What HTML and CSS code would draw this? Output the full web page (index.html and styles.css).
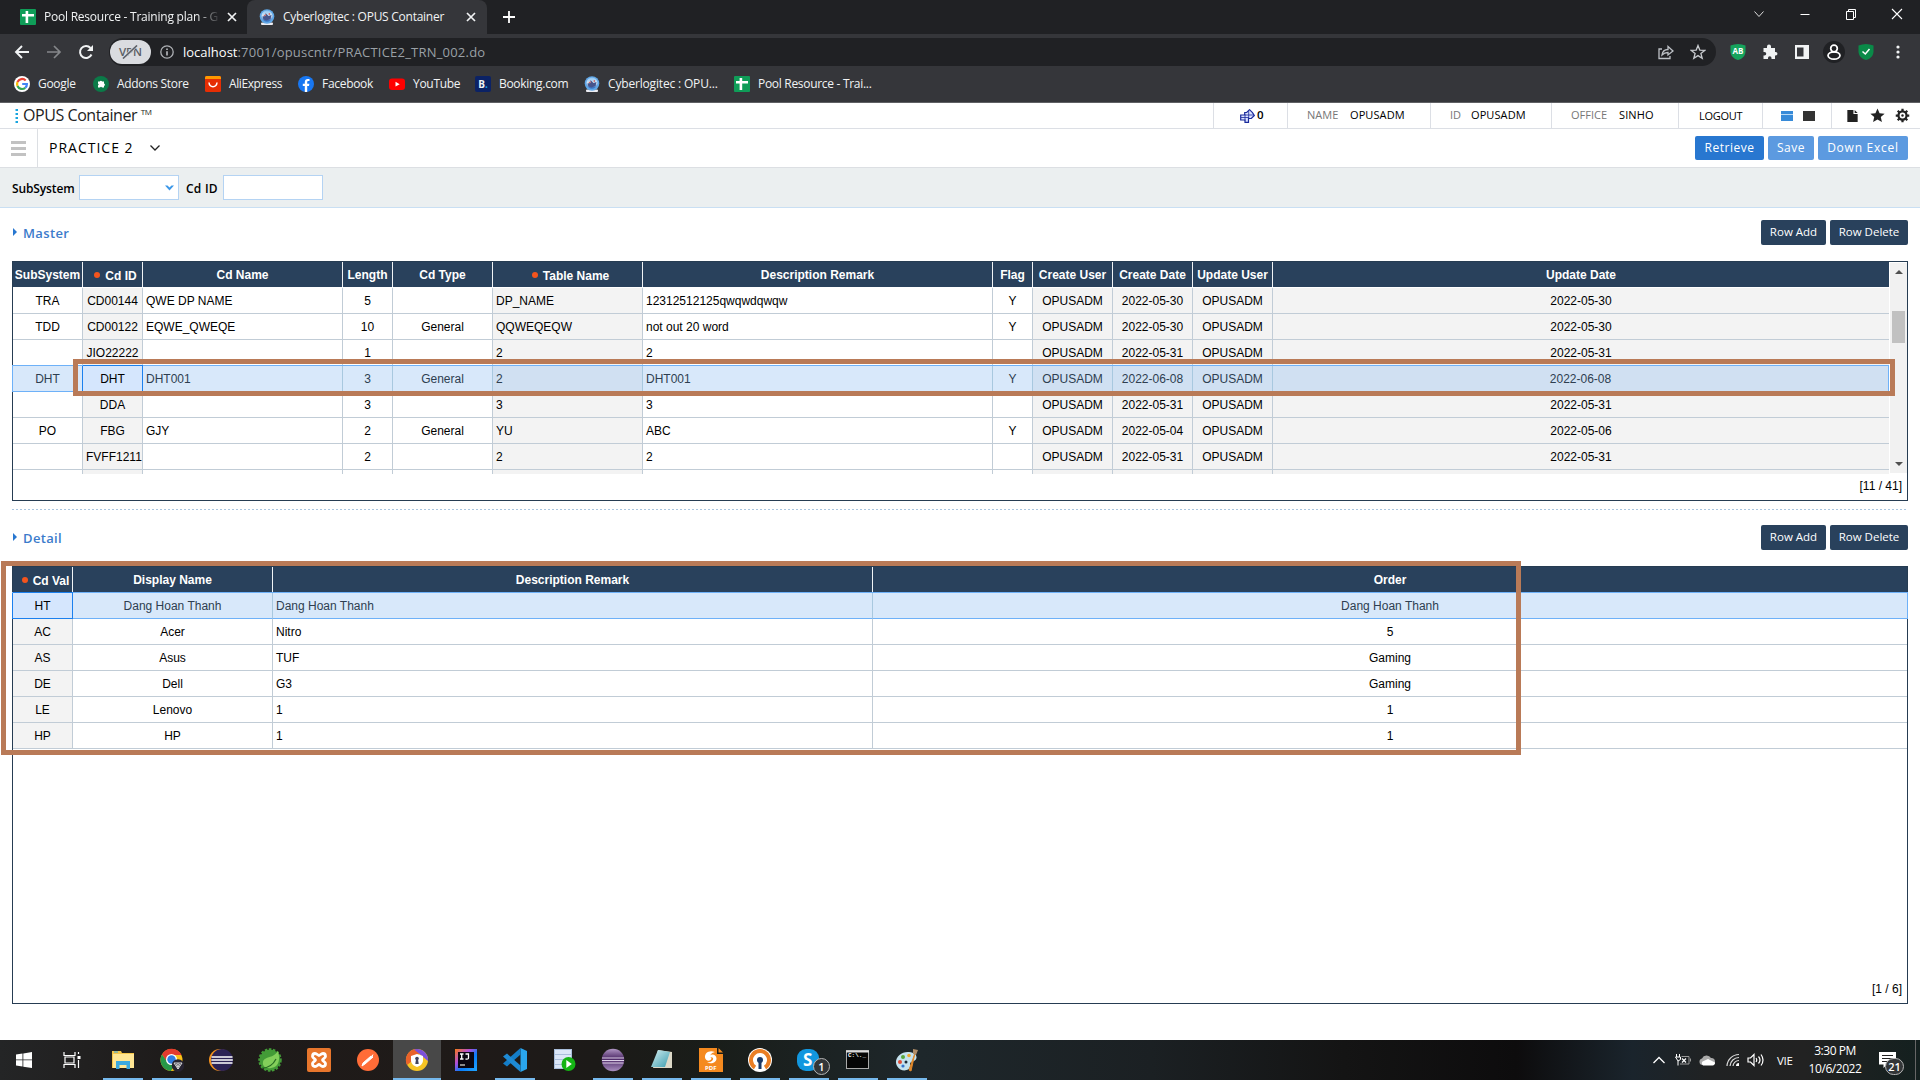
FILE: index.html
```html
<!DOCTYPE html>
<html lang="en">
<head>
<meta charset="utf-8">
<title>Cyberlogitec : OPUS Container</title>
<link rel="stylesheet" href="styles.css">
</head>
<body>
<svg class="defs" width="0" height="0">
  <defs>
    <linearGradient id="globe" x1="0" y1="0" x2="0" y2="1"><stop offset="0" stop-color="#8cc4f2"/><stop offset=".5" stop-color="#d6e6f4"/><stop offset="1" stop-color="#1d5bb5"/></linearGradient>
    <linearGradient id="ij" x1="0" y1="0" x2="1" y2="1"><stop offset="0" stop-color="#f97a12"/><stop offset=".35" stop-color="#b24dd8"/><stop offset=".6" stop-color="#087cfa"/><stop offset="1" stop-color="#21a6ff"/></linearGradient>
    <linearGradient id="purple" x1="0" y1="0" x2="0" y2="1"><stop offset="0" stop-color="#b096c4"/><stop offset=".45" stop-color="#4b2765"/><stop offset="1" stop-color="#a98fc0"/></linearGradient>
    <linearGradient id="glass" x1="0" y1="0" x2="1" y2="1"><stop offset="0" stop-color="#d5f0f2"/><stop offset="1" stop-color="#3b9cae"/></linearGradient>
    <symbol id="sheet" viewBox="0 0 16 16"><rect width="16" height="16" rx="1" fill="#0f9d58"/><path d="M2 5h12v2.4H8.2V14H5.6V7.4H2zM5.6 2h2.6v4H5.6z" fill="#fff"/></symbol>
    <symbol id="opus" viewBox="0 0 16 16"><rect x="2" y="13.500" width="12" height="2.500" rx="1" fill="#ececf2"/><circle cx="8" cy="7.500" r="7.300" fill="#5fa6e6"/><circle cx="8" cy="7" r="5.500" fill="url(#globe)"/><path d="M3.500 7.500l3-.5V4l3 3 3-1-1 4-4 1.500-3-1z" fill="#47558c"/><path d="M4.500 7l2-2v2zM9 5l2-1v2z" fill="#d9544d"/></symbol>
    <symbol id="x" viewBox="0 0 10 10"><path d="M1 1l8 8M9 1L1 9" stroke="#f1f3f4" stroke-width="1.7"/></symbol>
  </defs>
</svg>

<header class="browser">
  <div class="tabs">
    <div class="tab">
      <svg class="fav"><use href="#sheet"/></svg><span class="tab-title fade">Pool Resource - Training plan - G</span><svg class="close"><use href="#x"/></svg>
    </div>
    <div class="tab active">
      <svg class="fav"><use href="#opus"/></svg><span class="tab-title">Cyberlogitec : OPUS Container</span><svg class="close"><use href="#x"/></svg>
    </div>
    <svg class="plus" viewBox="0 0 12 12"><path d="M6 0v12M0 6h12" stroke="#fff" stroke-width="1.8"/></svg>
    <div class="window-buttons">
      <svg viewBox="0 0 12 12"><path d="M1.500 3.500L6 8.500l4.500-5" fill="none" stroke="#ddd"/></svg>
      <svg viewBox="0 0 12 12"><path d="M1.500 6.500h9" stroke="#fff"/></svg>
      <svg viewBox="0 0 12 12"><path d="M1.500 3.500h7v8h-7zM3.500 3.500v-2h7v8h-2" fill="none" stroke="#fff"/></svg>
      <svg viewBox="0 0 12 12"><path d="M1 1l10 10M11 1L1 11" stroke="#fff" stroke-width="1.100"/></svg>
    </div>
  </div>
  <div class="toolbar">
    <svg class="nav" viewBox="0 0 16 16"><path d="M15 8H2M8 2L2 8l6 6" fill="none" stroke="#f1f3f4" stroke-width="1.900"/></svg>
    <svg class="nav" viewBox="0 0 16 16"><path d="M1 8h13M8 2l6 6-6 6" fill="none" stroke="#85878a" stroke-width="1.700"/></svg>
    <svg class="nav" viewBox="0 0 16 16"><path d="M13.500 10.500A6 6 0 1 1 12.500 4" fill="none" stroke="#f1f3f4" stroke-width="2"/><path d="M15 1v6H9z" fill="#f1f3f4"/></svg>
    <div class="address">
      <span class="vpn">VPN<svg viewBox="0 0 24 14"><path d="M6 13L19 0" stroke="#dadce0" stroke-width="3"/><path d="M5 13.500L19 .5" stroke="#5b5f66" stroke-width="1.600"/></svg></span>
      <svg class="info" viewBox="0 0 14 14"><circle cx="7" cy="7" r="6.200" fill="none" stroke="#aeb1b5" stroke-width="1.300"/><path d="M7 6.200v4.300M7 3.400v1.500" stroke="#c4c6ca" stroke-width="1.500"/></svg>
      <span class="url"><b>localhost</b>:7001/opuscntr/PRACTICE2_TRN_002.do</span>
      <svg class="share" viewBox="0 0 16 16"><path d="M4 5H1v9.500h11V12" fill="none" stroke="#bdc1c6" stroke-width="1.300"/><path d="M4 11c.5-4 3-5.500 6-5.500V2.500L15 7l-5 4V8.500c-3 0-4.500 1-6 2.500z" fill="none" stroke="#bdc1c6" stroke-width="1.300"/></svg>
      <svg class="star" viewBox="0 0 16 16"><path d="M8 1.500l1.800 4.600 4.900.3-3.800 3.100 1.300 4.800L8 11.600l-4.200 2.700 1.300-4.800L1.300 6.400l4.900-.3z" fill="none" stroke="#c7cace" stroke-width="1.300"/></svg>
    </div>
    <div class="extensions">
      <span class="shield"><svg viewBox="0 0 16 16"><path d="M8 0c2.500 0 5 .5 7.500 1.500v6C15.500 12 12 15 8 16 4 15 .5 12 .5 7.500v-6C3 .5 5.500 0 8 0z" fill="#16a35c"/></svg><i>AB</i></span>
      <svg viewBox="0 0 16 16"><path d="M5 2.500a2 2 0 0 1 4 0V4h4v4h.700a1.700 1.700 0 0 1 0 3.500H13V15H9.500v-1a1.700 1.700 0 0 0-3.500 0v1H1.500v-3.500h1a1.700 1.700 0 0 0 0-3.500h-1V4H5z" fill="#f1f3f4"/></svg>
      <svg viewBox="0 0 16 16"><path d="M1 1h14v14H1zM3 3.500v9h6.500v-9z" fill="#f1f3f4" fill-rule="evenodd"/></svg>
      <svg class="avatar" viewBox="0 0 22 22"><circle cx="11" cy="11" r="11" fill="#202124"/><circle cx="11" cy="7.500" r="3.300" fill="none" stroke="#fff" stroke-width="1.700"/><ellipse cx="11" cy="14.500" rx="6" ry="3.700" fill="none" stroke="#fff" stroke-width="1.700"/></svg>
      <svg viewBox="0 0 16 16"><path d="M8 0c2.500 0 5 .5 7.500 1.500v6C15.500 12 12 15 8 16 4 15 .5 12 .5 7.500v-6C3 .5 5.500 0 8 0z" fill="#0a8a48"/><path d="M4.500 7.500L7.300 10l4.200-5" fill="none" stroke="#fff" stroke-width="1.500"/></svg>
      <svg viewBox="0 0 16 16"><g fill="#f1f3f4"><circle cx="8" cy="3" r="1.600"/><circle cx="8" cy="8" r="1.600"/><circle cx="8" cy="13" r="1.600"/></g></svg>
    </div>
  </div>
  <nav class="bookmarks">
    <a><svg viewBox="0 0 16 16"><circle cx="8" cy="8" r="8" fill="#fff"/><g fill="none" stroke-width="2.200"><path d="M3.500 6A5 5 0 0 1 11.700 4.500" stroke="#ea4335"/><path d="M3.500 6a5 5 0 0 0 0 4" stroke="#fbbc05"/><path d="M3.500 10a5 5 0 0 0 7.800 1.800" stroke="#34a853"/><path d="M11.300 11.800A5 5 0 0 0 12.900 8H8.200" stroke="#4285f4"/></g></svg>Google</a>
    <a><svg viewBox="0 0 16 16"><circle cx="8" cy="8" r="8" fill="#0b7a48"/><path d="M5 5.500h1.700a1.300 1.300 0 0 1 2.400 0H11v2a1.300 1.300 0 0 1 0 2.500v1.500H9a1.200 1.200 0 0 0-2 0H5V9.500a1.200 1.200 0 0 0 0-2z" fill="#fff"/></svg>Addons Store</a>
    <a class="ali"><svg viewBox="0 0 16 16"><rect width="16" height="16" rx="1.500" fill="#e62e04"/><path d="M0 1.500Q0 0 1.500 0h13Q16 0 16 1.500V3H0z" fill="#ff9900"/><path d="M4 6.500c.5 5.500 7.500 5.500 8 0" fill="none" stroke="#fff" stroke-width="1.500"/></svg>AliExpress</a>
    <a><svg viewBox="0 0 16 16"><circle cx="8" cy="8" r="8" fill="#1877f2"/><path d="M6.800 16V10H4.800V7.700h2V6c0-2 1.200-3.100 3-3.100l1.700.1v2h-1c-1 0-1.300.6-1.300 1.200v1.500h2.200L11 10H9.200v6z" fill="#fff"/></svg>Facebook</a>
    <a><svg viewBox="0 0 16 16"><rect y="2.500" width="16" height="11.500" rx="3" fill="#f00"/><path d="M6.500 5.800v4.800l4.200-2.400z" fill="#fff"/></svg>YouTube</a>
    <a><span class="booking">B<em>.</em></span>Booking.com</a>
    <a class="wide"><svg><use href="#opus"/></svg>Cyberlogitec : OPU...</a>
    <a><svg><use href="#sheet"/></svg>Pool Resource - Trai...</a>
  </nav>
</header>

<main class="page">
  <div class="topbar">
    <svg class="dots" viewBox="0 0 4 16"><path d="M.500 1h2.500v2H.500zM.500 5h2.500v2H.500zM.500 9h2.500v2H.500zM.500 13h2.500v2H.500z" fill="#19a5e0"/></svg>
    <h1>OPUS Container <sup>TM</sup></h1>
    <div class="msg"><svg viewBox="0 0 15 14"><path d="M.7 6h4V3.500h2L9.500.7l3 3L14.300 6.500l-3 3H8.500v3.800H5V11H.7z" fill="#dbe2ff" stroke="#1a2a9c" stroke-width="1.200"/><path d="M5 5.500v6M1 8.500h8M8.700 2v8M5 6h9" stroke="#1a2a9c" stroke-width=".8"/></svg>0</div>
    <div class="who w-name"><span>NAME</span>OPUSADM</div>
    <div class="who w-id"><span>ID</span>OPUSADM</div>
    <div class="who w-office"><span>OFFICE</span>SINHO</div>
    <div class="logout">LOGOUT</div>
    <div class="views"><i class="split"></i><i class="solid"></i></div>
    <div class="tools">
      <svg viewBox="0 0 16 16"><path d="M2.500 2H9v4.500h4.500V15h-11zM10.300 2l3.200 3.300h-3.200z" fill="#222"/></svg>
      <svg viewBox="0 0 16 16"><path d="M8 .5l2.200 5 5.400.5-4.100 3.600 1.200 5.400L8 12.200 3.300 15l1.200-5.400L.4 6l5.400-.5z" fill="#222"/></svg>
      <svg viewBox="0 0 16 16"><circle cx="8" cy="8" r="4.300" fill="none" stroke="#222" stroke-width="2.400"/><path d="M8 .8v3M8 12.200v3M.8 8h3M12.200 8h3M2.900 2.900L5 5M11 11l2.100 2.100M13.100 2.900L11 5M5 11l-2.100 2.100" stroke="#222" stroke-width="2.400"/><circle cx="8" cy="8" r="1.300" fill="#222"/></svg>
    </div>
  </div>
  <div class="titlebar">
    <div class="burger"><i></i><i></i><i></i></div>
    <h2>PRACTICE 2</h2>
    <svg class="caret" viewBox="0 0 12 8"><path d="M1.500 1.500L6 6l4.500-4.500" fill="none" stroke="#222" stroke-width="1.300"/></svg>
    <div class="actions"><button class="retrieve">Retrieve</button><button class="save">Save</button><button class="excel">Down Excel</button></div>
  </div>
  <div class="search">
    <label class="l-sub">SubSystem</label>
    <div class="field"><svg viewBox="0 0 9 6"><path d="M0 .5h2.500l2 2 2-2H9L4.500 5.500z" fill="#3b97e8"/></svg></div>
    <label class="l-cd">Cd ID</label>
    <div class="field"></div>
  </div>

  <section class="section">
    <div class="section-head"><h3>Master</h3><div class="row-buttons"><button>Row Add</button><button>Row Delete</button></div></div>
    <div class="sheet master">
      <div class="body">
        <div class="rows">
          <div class="row head"><b>SubSystem</b><b class="req">Cd ID</b><b>Cd Name</b><b>Length</b><b>Cd Type</b><b class="req">Table Name</b><b>Description Remark</b><b>Flag</b><b>Create User</b><b>Create Date</b><b>Update User</b><b>Update Date</b></div>
          <div class="row first"><span>TRA</span><span>CD00144</span><span>QWE DP NAME</span><span>5</span><span></span><span>DP_NAME</span><span>12312512125qwqwdqwqw</span><span>Y</span><span>OPUSADM</span><span>2022-05-30</span><span>OPUSADM</span><span>2022-05-30</span></div>
          <div class="row"><span>TDD</span><span>CD00122</span><span>EQWE_QWEQE</span><span>10</span><span>General</span><span>QQWEQEQW</span><span>not out 20 word</span><span>Y</span><span>OPUSADM</span><span>2022-05-30</span><span>OPUSADM</span><span>2022-05-30</span></div>
          <div class="row"><span></span><span>JIO22222</span><span></span><span>1</span><span></span><span>2</span><span>2</span><span></span><span>OPUSADM</span><span>2022-05-31</span><span>OPUSADM</span><span>2022-05-31</span></div>
          <div class="row selected"><span>DHT</span><span class="focus">DHT</span><span>DHT001</span><span>3</span><span>General</span><span>2</span><span>DHT001</span><span>Y</span><span>OPUSADM</span><span>2022-06-08</span><span>OPUSADM</span><span>2022-06-08</span></div>
          <div class="row"><span></span><span>DDA</span><span></span><span>3</span><span></span><span>3</span><span>3</span><span></span><span>OPUSADM</span><span>2022-05-31</span><span>OPUSADM</span><span>2022-05-31</span></div>
          <div class="row"><span>PO</span><span>FBG</span><span>GJY</span><span>2</span><span>General</span><span>YU</span><span>ABC</span><span>Y</span><span>OPUSADM</span><span>2022-05-04</span><span>OPUSADM</span><span>2022-05-06</span></div>
          <div class="row"><span></span><span class="long">FVFF1211</span><span></span><span>2</span><span></span><span>2</span><span>2</span><span></span><span>OPUSADM</span><span>2022-05-31</span><span>OPUSADM</span><span>2022-05-31</span></div>
          <div class="row"><span></span><span></span><span></span><span></span><span></span><span></span><span></span><span></span><span></span><span></span><span></span><span></span></div>
        </div>
        <div class="scroll"><i class="up"></i><i class="thumb"></i><i class="down"></i></div>
      </div>
      <div class="count">[11 / 41]</div>
    </div>
  </section>
  <div class="divider"></div>
  <section class="section second">
    <div class="section-head"><h3>Detail</h3><div class="row-buttons"><button>Row Add</button><button>Row Delete</button></div></div>
    <div class="sheet detail">
      <div class="rows">
        <div class="row head"><b class="req">Cd Val</b><b>Display Name</b><b>Description Remark</b><b>Order</b></div>
        <div class="row selected"><span class="focus">HT</span><span>Dang Hoan Thanh</span><span>Dang Hoan Thanh</span><span>Dang Hoan Thanh</span></div>
        <div class="row"><span>AC</span><span>Acer</span><span>Nitro</span><span>5</span></div>
        <div class="row"><span>AS</span><span>Asus</span><span>TUF</span><span>Gaming</span></div>
        <div class="row"><span>DE</span><span>Dell</span><span>G3</span><span>Gaming</span></div>
        <div class="row"><span>LE</span><span>Lenovo</span><span>1</span><span>1</span></div>
        <div class="row"><span>HP</span><span>HP</span><span>1</span><span>1</span></div>
      </div>
      <div class="count">[1 / 6]</div>
    </div>
  </section>
</main>
<div class="mark mark-row"></div>
<div class="mark mark-detail"></div>

<footer class="taskbar">
  <div class="apps">
    <div><svg viewBox="0 0 24 24"><path d="M4 6.500l6.500-1v6H4zM11.300 5.400L20 4v7.500h-8.700zM4 12.300h6.500v6.200L4 17.500zM11.300 12.300H20V20l-8.700-1.300z" fill="#fff"/></svg></div>
    <div class="view"><svg viewBox="0 0 24 24"><path d="M4 4v3.500h11V4M4 20v-3.500h11V20M5 9h9v6H5zM18.500 4v2M18.500 12v8" fill="none" stroke="#fff" stroke-width="1.200"/><path d="M17.500 8h3v3h-3z" fill="#fff"/></svg></div>
    <div class="open"><svg viewBox="0 0 24 24"><path d="M1 3h9l1 2h12v15H1z" fill="#f5c64a"/><path d="M2 6h21v14H2z" fill="#ffe694"/><path d="M5 13h14v8h-3.500v-4h-7v4H5z" fill="#3aa9e0"/><path d="M3 4h4" stroke="#3aa9e0"/></svg></div>
    <div class="open"><svg viewBox="0 0 24 24"><circle cx="11.500" cy="12" r="11" fill="#fbc116"/><path d="M2 6.500A11 11 0 0 1 21.500 7H12L7 14z" fill="#e33b2e"/><path d="M2 6.500A11 11 0 0 0 11 23l4-7-7-1z" fill="#279847"/><circle cx="11.500" cy="11.500" r="5.500" fill="#fff"/><circle cx="11.500" cy="11.500" r="4.200" fill="#2f7de1"/><circle cx="18" cy="17.500" r="6.300" fill="#262330"/><path d="M14 15h8l-4 6zM16 16l2 3 2-3M18 15v6" fill="none" stroke="#ddd" stroke-width="1"/></svg></div>
    <div><svg viewBox="0 0 24 24"><circle cx="11" cy="12" r="11" fill="#f7931e"/><circle cx="13" cy="12" r="11" fill="#2c2255"/><path d="M2.500 9h21M2.300 12h21.500M2.500 15h21" stroke="#fff" stroke-width="1.500"/></svg></div>
    <div><svg viewBox="0 0 24 24"><circle cx="12" cy="12" r="10.500" fill="#439b37" stroke="#439b37" stroke-width="2.500" stroke-dasharray="2.500 1.500"/><path d="M20 3c2 7 2 16-7 17-5 1-9-2-8-6 1-6 10-3 15-11z" fill="#82cf5a"/><path d="M4 20c6 0 11-3 14-9" fill="none" stroke="#286d23" stroke-width="1.200"/></svg></div>
    <div><svg viewBox="0 0 24 24"><rect width="24" height="24" rx="2" fill="#e8762c"/><path d="M8 5.500c2 0 3 2 4 2s2-2 4-2 2.500 1.500 2.500 3S15.500 11 15.500 12s3 2 3 3.500-.5 3-2.500 3-3-2-4-2-2 2-4 2-2.500-1.500-2.500-3 3-2.500 3-3.500-3-2-3-3.500.5-3 2.500-3z" fill="none" stroke="#fff" stroke-width="2.800"/></svg></div>
    <div><svg viewBox="0 0 24 24"><circle cx="12" cy="12" r="11" fill="#ff6c37"/><path d="M6 18l1-3 8-7 2 1-8 7zM17 6.500l-1 2" fill="#fff" stroke="#fff" stroke-width="1"/></svg></div>
    <div class="open current"><svg viewBox="0 0 24 24"><circle cx="12" cy="12" r="11" fill="#f6c424"/><path d="M2 17A11 11 0 0 1 12 1l2 5-7 7z" fill="#e9622b"/><path d="M9 1.500A11 11 0 0 1 23 13l-6-5z" fill="#7b50db"/><path d="M12 6l6 2v4c0 4-3 6-6 7-3-1-6-3-6-7V8z" fill="#fff"/><circle cx="12" cy="10.500" r="1.800" fill="#40435c"/><path d="M11 11h2l.7 5h-3.400z" fill="#40435c"/></svg></div>
    <div><svg viewBox="0 0 24 24"><rect x="1" y="1" width="22" height="22" fill="url(#ij)"/><rect x="4" y="4" width="16" height="16" fill="#0a0612"/><path d="M6 6h3.500M6 11h3.500M7.700 6v5M11.500 6h3v4q0 1.500-3 1" fill="none" stroke="#fff" stroke-width="1.300"/><path d="M6 17h5" stroke="#aaa" stroke-width="1.600"/></svg></div>
    <div class="open"><svg viewBox="0 0 24 24"><path d="M17.500 0L24 3v18l-6.500 3z" fill="#2aa6ee"/><path d="M17.500 0v6.500L4 18.500 0 15.500z" fill="#147dc8"/><path d="M17.500 24v-6.500L4 5.500 0 8.500z" fill="#1e8ad4"/></svg></div>
    <div><svg viewBox="0 0 24 24"><path d="M2 1h18v20H2z" fill="#a9bedb"/><path d="M3 2h16v4H3zM3 7h16v4H3zM3 12h16v4H3zM3 17h16v3H3z" fill="#dbe6f7"/><circle cx="16.500" cy="16" r="7" fill="#14b414"/><path d="M14.300 12v8l5.500-4z" fill="#fff"/></svg></div>
    <div class="open"><svg viewBox="0 0 24 24"><circle cx="12" cy="12" r="11.300" fill="url(#purple)"/><path d="M1 10h22M1 12.500h22M1.500 15h21" stroke="#ddd0e8" stroke-width="1.200"/></svg></div>
    <div class="open"><svg viewBox="0 0 24 24"><path d="M8 2l14 2v16L3 20z" fill="#ddd9c8"/><path d="M8 2l12 2-5 15H1z" fill="url(#glass)"/></svg></div>
    <div class="open"><svg viewBox="0 0 24 24"><path d="M0 0h18v6h6v18H0z" fill="#f58a1f"/><path d="M19.500 0v4.500H24z" fill="#f58a1f"/><path d="M16 4C10 1.500 5.500 5 6 9.500c.3 3 3.500 4 5.500 2.500 1.500-1.300 1-3-.5-2.500 2.500-.7 3.500.5 3 2-.8 2-3 3-6 3 4.500 2 9.500 0 9.500-4C17.500 7 13 5.500 11 7.500 12 5.500 14 4.300 16 4z" fill="#fff"/></svg><small class="pdf">PDF</small></div>
    <div class="open"><svg viewBox="0 0 24 24"><circle cx="12" cy="12" r="12" fill="#fff"/><path d="M7 19.500a9 9 0 1 1 10 0" fill="none" stroke="#ea7e24" stroke-width="4"/><circle cx="12" cy="12" r="3" fill="#1a3967"/><path d="M10.500 13h3v8h-3z" fill="#1a3967"/></svg></div>
    <div class="open"><svg viewBox="0 0 24 24"><rect x="0" y="1" width="22" height="22" rx="9" fill="#1297df"/></svg><strong class="skype">S</strong><small class="badge">1</small></div>
    <div class="open"><svg viewBox="0 0 24 24"><rect x=".5" y="2.500" width="22" height="18" fill="#050505" stroke="#aaa"/><path d="M0 3.500h23" stroke="#ddd" stroke-width="2"/></svg><small class="cmd">C:\._</small></div>
    <div class="open"><svg viewBox="0 0 24 24"><path d="M2 18C-2 11 6 3 14 4c9 1 9 7 5 9-3 1-4 1-4 4 1 6-9 8-13 1z" fill="#c5e2ee"/><circle cx="5" cy="14" r="2" fill="#e04b36"/><circle cx="8" cy="9" r="2" fill="#58a83d"/><circle cx="14" cy="7.500" r="1.800" fill="#f0aa30"/><circle cx="8" cy="18" r="1.600" fill="#3574cc"/><circle cx="11" cy="14" r="1.500" fill="#1b2a36"/><path d="M20 5l-4 18-2-1z" fill="#e0892c" stroke="#e0892c"/><path d="M18 1l5 1-2 5-3-1z" fill="#b08d68"/></svg></div>
  </div>
  <div class="tray">
    <svg class="t-up" viewBox="0 0 12 12"><path d="M.5 9L6 3.500 11.500 9" fill="none" stroke="#fff" stroke-width="1.300"/></svg>
    <svg class="t-bat" viewBox="0 0 16 12"><path d="M1.500 0v3M4.500 0v3M.5 3h5v2.500L3 7zM3 7v4.500" fill="none" stroke="#fff"/><path d="M6.500 2.500H14v7.500H5M15.500 4.500v3" fill="none" stroke="#999"/><path d="M7 4.500l4 4M11 4.500l-4 4" stroke="#fff" stroke-width="1.200"/></svg>
    <svg class="t-cloud" viewBox="0 0 17 12"><path d="M3.500 11A3.300 3.300 0 0 1 3 4.500a5 5 0 0 1 9-.5 3.600 3.600 0 0 1 1.500 7z" fill="#aaa"/><path d="M4 11.500a3 3 0 0 1-.5-4L9 5l7 3.500a2.500 2.500 0 0 1-2.500 3z" fill="#fff"/></svg>
    <svg class="t-wifi" viewBox="0 0 14 14"><g fill="none" stroke="#ddd" stroke-width="1.200"><path d="M1 13A12 12 0 0 1 13 1.500M4 13a9 9 0 0 1 9-8.500M7 13a6 6 0 0 1 6-5.500"/></g><path d="M10 13a3 3 0 0 1 3-3v3z" fill="#fff"/></svg>
    <svg class="t-vol" viewBox="0 0 17 14"><path d="M1 5h2.500L7 1.500v11L3.500 9H1zM9 5q1.500 2 0 4M11.500 3.500q3 3.500 0 7M14 1.500q4 5.500 0 11" fill="none" stroke="#fff" stroke-width="1.200"/></svg>
    <span class="lang">VIE</span>
    <div class="clock"><span>3:30 PM</span><span>10/6/2022</span></div>
    <div class="notes"><svg viewBox="0 0 17 16"><path d="M0 0h17v12.500H8L4.500 16v-3.500H0z" fill="#fff"/><path d="M3 3.500h11M3 6.500h11M3 9.500h7" stroke="#222"/></svg><small class="badge">21</small></div>
    <i class="peek"></i>
  </div>
</footer>
</body>
</html>
```
FILE: styles.css
```css
* { box-sizing: border-box; }
body { margin: 0; width: 1920px; height: 1080px; overflow: hidden; position: relative; background: #fff; font-family: "Open Sans", "Noto Sans", sans-serif; font-size: 12px; color: #000; display: flex; flex-direction: column; }
svg { display: block; flex: none; }
.defs { position: absolute; }
h1, h2, h3 { margin: 0; font-weight: 400; }
button { border: 0; padding: 0; font-family: inherit; color: #fff; }

/* browser chrome */
.browser { background: #35363a; color: #f1f3f4; height: 103px; border-bottom: 1px solid #5f6064; flex: none; }
.tabs { display: flex; align-items: center; height: 34px; background: #202124; padding-left: 7px; }
.tab { display: flex; align-items: center; width: 240px; height: 34px; padding: 0 11px 0 12px; }
.tab:first-child { padding-left: 13px; padding-right: 10px; }
.tab.active { background: #35363a; border-radius: 8px 8px 0 0; }
.fav { width: 16px; height: 16px; margin-right: 8px; }
.tab-title { flex: 1; white-space: nowrap; letter-spacing: -.26px; padding-bottom: 1px; }
.fade { letter-spacing: -.23px; margin-right: 6px; -webkit-mask-image: linear-gradient(90deg, #000 86%, transparent); mask-image: linear-gradient(90deg, #000 86%, transparent); }
.close { width: 10px; height: 10px; }
.plus { width: 12px; height: 12px; margin-left: 16px; }
.window-buttons { margin-left: auto; display: flex; gap: 34px; padding: 0 17px 6px 0; }
.window-buttons svg { width: 12px; height: 12px; }
.toolbar { display: flex; align-items: center; height: 36px; padding-left: 14px; }
.nav { width: 16px; height: 16px; margin-right: 16px; }
.nav:nth-child(3) { margin-right: 15px; }
.address { display: flex; align-items: center; width: 1607px; height: 28px; border-radius: 14px; background: #202124; padding-left: 1px; }
.vpn { position: relative; width: 41px; height: 24px; border-radius: 12px; background: #dadce0; color: #5b5f66; font-weight: 600; font-size: 11.5px; line-height: 24px; text-align: center; margin-right: 9px; }
.vpn svg { position: absolute; left: 8px; top: 5px; width: 24px; height: 14px; }
.info { width: 14px; height: 14px; margin-right: 9px; }
.url { color: #9aa0a6; font-size: 13px; letter-spacing: .21px; }
.url b { font-weight: 400; color: #fff; letter-spacing: 0; }
.share { width: 16px; height: 16px; margin-left: auto; margin-right: 16px; }
.star { width: 16px; height: 16px; margin-right: 10px; }
.extensions { display: flex; align-items: center; gap: 16px; margin-left: 14px; }
.extensions > * { width: 16px; height: 16px; }
.extensions .avatar { width: 22px; height: 22px; margin: 0 -3px; }
.shield { position: relative; }
.shield i { position: absolute; left: 0; top: 0; width: 16px; text-align: center; font: bold 8px/14px "Open Sans", sans-serif; color: #fff; }
.bookmarks { display: grid; grid-template-columns: 79px 112px 93px 91px 86px 109px 150px auto; padding-left: 14px; height: 28px; letter-spacing: -.3px; }
.bookmarks a { display: flex; align-items: center; gap: 8px; white-space: nowrap; padding-bottom: 1px; }
.bookmarks .wide { letter-spacing: -.17px; }
.bookmarks .ali { letter-spacing: -.4px; }
.bookmarks svg { width: 16px; height: 16px; }
.booking { width: 16px; height: 16px; border-radius: 2px; background: #0b2265; font: bold 10px/16px "Open Sans", sans-serif; text-align: center; letter-spacing: 0; }
.booking em { color: #1ba5e8; font-style: normal; }

/* application header */
.page { flex: 1; }
.topbar { display: flex; height: 26px; border-bottom: 1px solid #dcdfe5; font-size: 11px; line-height: 24px; }
.topbar > div { border-left: 1px solid #dcdfe5; display: flex; align-items: center; padding-bottom: 1px; }
.dots { width: 4px; height: 16px; margin: 5px 4px 0 15px; }
.topbar h1 { flex: 1; font-size: 16px; line-height: 24px; letter-spacing: -.43px; color: #222; }
.topbar h1 sup { font-size: 8px; line-height: 0; vertical-align: 6px; letter-spacing: -.5px; }
.topbar .msg { width: 74px; padding-left: 26px; gap: 2px; font-weight: 600; font-size: 11.5px; }
.msg svg { width: 15px; height: 14px; margin-top: 2px; }
.who { letter-spacing: .1px; }
.who span { color: #777; letter-spacing: 0; }
.w-name { width: 143px; padding-left: 19px; }
.w-name span { width: 43px; }
.w-id { width: 121px; padding-left: 19px; }
.w-id span { width: 21px; }
.w-office { width: 127px; padding-left: 19px; }
.w-office span { width: 48px; }
.topbar .logout { width: 84px; padding: 1px 0 0 20px; letter-spacing: -.25px; }
.views { width: 69px; padding-left: 18px; gap: 10px; }
.views i { width: 12px; height: 10px; background: #333; margin-top: 2px; }
.views .split { background: linear-gradient(#378ad8 0 3px, #b9daf5 3px 4px, #378ad8 4px); }
.tools { width: 89px; padding-left: 13px; gap: 10px; }
.tools svg { width: 15px; height: 15px; margin-top: 1px; }
.titlebar { display: flex; align-items: center; height: 39px; border-bottom: 1px solid #dcdfe3; }
.burger { width: 38px; height: 38px; border-right: 1px solid #dcdfe3; padding: 12px 0 0 11px; display: flex; flex-direction: column; gap: 3px; }
.burger i { width: 15px; height: 3px; background: #c2c2c2; }
.titlebar h2 { font-size: 14px; width: 100px; padding: 0 0 2px 11px; letter-spacing: 1px; white-space: nowrap; }
.caret { width: 12px; height: 8px; margin-left: 11px; }
.actions { margin-left: auto; display: flex; gap: 4px; padding-right: 12px; }
.actions button { height: 24px; border-radius: 2px; font-size: 12px; letter-spacing: .5px; line-height: 23px; padding-bottom: 1px; background: #5c9ae0; }
.actions .retrieve { width: 69px; background: #2877d0; }
.actions .save { width: 46px; }
.actions .excel { width: 90px; letter-spacing: .75px; }
.search { display: flex; align-items: center; height: 40px; background: #ebeff0; border-bottom: 1px solid #c9dff3; padding-left: 12px; font-weight: 600; }
.search label { padding-top: 1px; }
.l-sub { width: 67px; letter-spacing: -.12px; }
.l-cd { width: 37px; margin-left: 7px; letter-spacing: .25px; }
.field { width: 100px; height: 25px; background: #fff; border: 1px solid #b4d3f3; display: flex; align-items: center; justify-content: flex-end; padding-right: 4px; }
.field svg { width: 9px; height: 6px; }

/* sections */
.section { padding: 12px 12px 0; }
.section-head { display: flex; justify-content: space-between; height: 41px; }
.section-head h3 { font-size: 13px; font-weight: 600; line-height: 26px; letter-spacing: .35px; color: #3b7bcb; display: flex; }
.section-head h3::before { content: ""; margin: 8px 6px 0 1px; height: 0; border: solid transparent; border-width: 4px 0 4px 4px; border-left-color: #2877d0; }
.row-buttons { display: flex; gap: 4px; }
.row-buttons button { width: 65px; height: 25px; border-radius: 2px; background: #29415c; font-size: 11.500px; white-space: nowrap; line-height: 22px; padding-bottom: 2px; }
.row-buttons button + button { width: 78px; }
.sheet { border: 1px solid #263c52; font-family: "Liberation Sans", Arial, sans-serif; display: flex; flex-direction: column; }
.master { height: 240px; }
.detail { height: 438px; justify-content: space-between; }
.body { display: flex; height: 212px; }
.body .rows { width: 1876px; height: 212px; overflow: clip; overflow-clip-margin: 1px; }
.row { display: grid; grid-template-rows: 100%; height: 26px; line-height: 26px; text-align: center; white-space: nowrap; }
.master .row { grid-template-columns: 70px 60px 200px 50px 100px 150px 350px 40px 80px 80px 80px 1fr; }
.master .row:last-child { height: 4px; }
.master .row:last-child span { border-bottom: 0; }
.detail .row { grid-template-columns: 60px 200px 600px 1fr; }
.row span, .row b { border-right: 1px solid #c1ccd6; border-bottom: 1px solid #c1ccd6; min-width: 0; min-height: 0; }
.row :last-child { border-right: 0; }
.row.head { height: 25px; line-height: 26px; background: #29415c; color: #fff; }
.row.head b { border-bottom: 0; border-right-color: #f0f3f5; }
.row.head b:last-child { border-right: 0; }
.master .row.first { height: 27px; border-top: 1px solid #fff; }
.row.head .req { line-height: 28px; padding-left: 6px; }
.req::before { content: ""; display: inline-block; width: 6px; height: 6px; border-radius: 3px; background: #f4541d; margin-right: 5px; vertical-align: 2px; }
.master .row span:nth-child(3), .master .row span:nth-child(6), .master .row span:nth-child(7), .detail .row span:nth-child(3) { text-align: left; padding-left: 3px; }
.master .row span:nth-child(2), .master .row span:nth-child(6), .master .row span:nth-child(n+9), .detail .row span:first-child { background: #f3f3f3; }
.row .long { padding-left: 3px; text-align: left; }
.row.selected { position: relative; height: 27px; margin: -1px 0 0 -1px; border: 1px solid #6eb1f8; border-width: 1px 0 0 1px; color: #2e3e50; }
.row.selected span { background: #d8e8fa; border-right-color: #a8c8df; border-bottom-color: #6eb1f8; }
.master .row.selected span:nth-child(6), .master .row.selected span:nth-child(n+9) { background: #d0e0f2; }
.row.selected span:last-child { border-right: 1px solid #6eb1f8; }
.row.selected .focus, .detail .row.selected .focus { color: #000; background: #d5e6fd; position: relative; border-color: #1b80ee; box-shadow: -1px 0 #1b80ee, 0 -1px #1b80ee; }
.master .row.selected .focus { background: #d5e6fd; }
.detail .row.head { height: 26px; }
.detail .row.selected { margin-right: -1px; }
.scroll { width: 17px; margin-left: 1px; height: 211px; background: #f1f1f1; display: flex; flex-direction: column; align-items: center; border-top: 1px solid #fff; }
.scroll .up { margin-top: 7px; border: solid transparent; border-width: 0 4px 4px; border-bottom-color: #505050; }
.scroll .thumb { width: 13px; height: 32px; margin-top: 37px; background: #c1c1c1; }
.scroll .down { margin-top: auto; margin-bottom: 7px; border: solid transparent; border-width: 4px 4px 0; border-top-color: #505050; }
.count { text-align: right; padding-right: 5px; height: 26px; line-height: 24px; }
.divider { height: 1px; margin: 8px 12px 0; background: repeating-linear-gradient(90deg, #aac6e0 0 2px, #fff 2px 4px); }
.second { padding-top: 15px; }
.mark { position: absolute; border: 5px solid #b97a57; }
.mark-row { left: 73px; top: 359px; width: 1822px; height: 37px; }
.mark-detail { left: 1px; top: 561px; width: 1520px; height: 194px; }

/* taskbar */
.taskbar { position: relative; height: 40px; flex: none; display: flex; justify-content: space-between; color: #fff; background: linear-gradient(90deg, #242526 0, #1e1b1a 9%, #1f1a18 25%, #1c1a18 31%, #191d19 37%, #1e272b 48%, #1b2023 60%, #141414 70%, #0d0c0d 79%, #1a242c 85%, #202223 89%, #222 94%, #14201f 100%); }
.apps { display: flex; gap: 1px; }
.apps div { position: relative; width: 48px; height: 40px; padding: 8px 0 0 12px; }
.apps .view { padding-left: 11px; }
.apps svg { width: 24px; height: 24px; }
.apps div:nth-child(n+3) { left: 1px; }
.open::after { content: ""; position: absolute; left: 4px; right: 4px; bottom: 0; height: 2px; background: #76b9ed; }
.open.current { background: #484848; }
.open.current::after { left: 0; right: 0; }
.badge { position: absolute; border: 1px solid #b5b5b5; border-radius: 9px; background: #333638; font-size: 11px; font-weight: 600; text-align: center; line-height: 15px; }
.apps .badge { left: 28px; top: 18px; width: 17px; height: 17px; }
.skype { position: absolute; left: 18px; top: 9px; font-size: 17px; line-height: 22px; }
.pdf { position: absolute; left: 18px; top: 24px; font: bold 6px/8px "Open Sans", sans-serif; }
.cmd { position: absolute; left: 14px; top: 12px; font: bold 6px/8px "Liberation Mono", monospace; }
.tray { position: relative; width: 268px; display: flex; align-items: center; }
.tray .t-up { width: 12px; height: 12px; margin: 0 10px 0 1px; }
.t-bat { width: 16px; height: 12px; margin-right: 8px; }
.t-cloud { width: 17px; height: 12px; margin-right: 10px; }
.t-wifi { width: 14px; height: 14px; margin-right: 7px; }
.t-vol { width: 17px; height: 14px; margin-right: 13px; }
.lang { width: 25px; font-size: 11.500px; letter-spacing: -.3px; }
.clock { width: 66px; display: flex; flex-direction: column; text-align: center; font-size: 12px; line-height: 18px; letter-spacing: -.45px; }
.notes { position: relative; width: 28px; height: 40px; padding: 12px 0 0 11px; }
.notes svg { width: 17px; height: 16px; }
.notes .badge { left: 17px; top: 18px; width: 19px; height: 17px; }
.peek { position: absolute; right: 4px; top: 0; width: 1px; height: 40px; background: #666; }
```
